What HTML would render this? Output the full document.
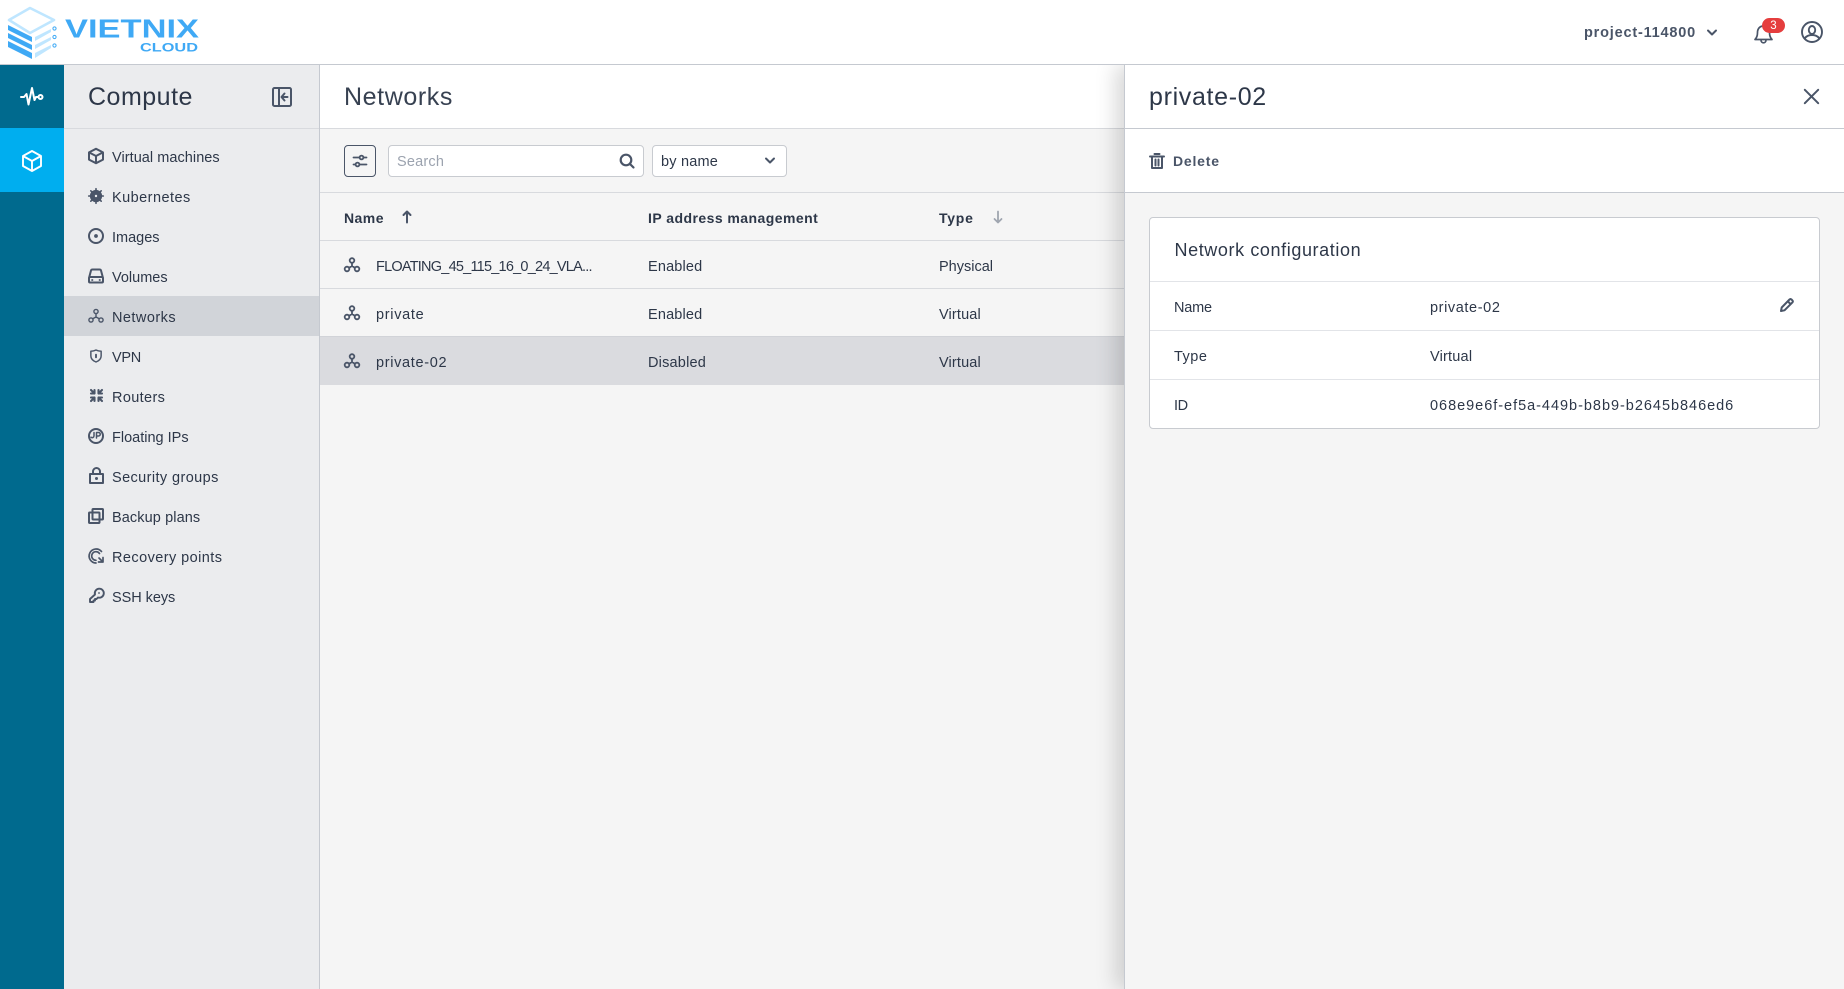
<!DOCTYPE html>
<html lang="en"><head><meta charset="utf-8"><title>Networks</title>
<style>
*{box-sizing:border-box;margin:0;padding:0}
html,body{width:1844px;height:989px;overflow:hidden;background:#f5f5f5}
body{font-family:"Liberation Sans",Arial,sans-serif;color:#2d3748;position:relative}
.a{position:absolute}
.t{position:absolute;white-space:nowrap;font-size:14.5px;line-height:20px;color:#2d3748}
.b{font-weight:700;font-size:14px;letter-spacing:.45px}
.h{font-size:25px;line-height:32px;letter-spacing:.5px}
svg{position:absolute;display:block;fill:none;stroke:#4a5568;stroke-width:1.7;stroke-linecap:round;stroke-linejoin:round;overflow:visible}
.hl{position:absolute;height:1px;background:#d8dade}
</style></head><body>

<!-- sidebar -->
<aside class="a" style="left:64px;top:65px;width:256px;height:924px;background:#ebecee;border-right:1px solid #c5c9d0">
<div class="hl" style="left:0;top:63px;width:255px"></div>
<div class="a" style="left:0;top:231px;width:255px;height:40px;background:#d1d4d9"></div>
</aside>
<span class="t h" style="left:88px;top:81px">Compute</span>
<svg style="left:272px;top:87px;stroke-width:2" width="20" height="20" viewBox="0 0 20 20"><rect x="1" y="1" width="18" height="18" rx="1.500"/><path d="M7 1v18M15.500 10H10M12.500 6.500L9.500 10l3 3.500"/></svg>

<span class="t" style="left:112px;top:148px;letter-spacing:.05px">Virtual machines</span>
<span class="t" style="left:112px;top:188px;letter-spacing:.45px">Kubernetes</span>
<span class="t" style="left:112px;top:228px">Images</span>
<span class="t" style="left:112px;top:268px">Volumes</span>
<span class="t" style="left:112px;top:308px;letter-spacing:.45px">Networks</span>
<span class="t" style="left:112px;top:348px;letter-spacing:-.3px">VPN</span>
<span class="t" style="left:112px;top:388px;letter-spacing:.35px">Routers</span>
<span class="t" style="left:112px;top:428px">Floating IPs</span>
<span class="t" style="left:112px;top:468px;letter-spacing:.4px">Security groups</span>
<span class="t" style="left:112px;top:508px;letter-spacing:.1px">Backup plans</span>
<span class="t" style="left:112px;top:548px;letter-spacing:.43px">Recovery points</span>
<span class="t" style="left:112px;top:588px;letter-spacing:-.05px">SSH keys</span>

<svg style="left:88px;top:148px" width="16" height="16" viewBox="0 0 16 16"><path d="M8 .8l7 3.600v7.200l-7 3.600-7-3.600V4.400zM1 4.400l7 3.600 7-3.600M8 8v7.200" stroke-width="2"/></svg>
<svg style="left:88px;top:188px" width="16" height="16" viewBox="0 0 16 16"><circle cx="8" cy="8" r="5.300" fill="#4a5568"/><path d="M8 .7v14.600M.7 8h14.600M2.800 2.800l10.400 10.400M13.200 2.800L2.800 13.200" stroke-width="1.600"/><circle cx="8" cy="8" r="1.200" fill="#ebecee" style="stroke:none"/></svg>
<svg style="left:88px;top:228px" width="16" height="16" viewBox="0 0 16 16"><circle cx="8" cy="8" r="7" stroke-width="2"/><circle cx="8" cy="8" r="1.900" fill="#4a5568" style="stroke:none"/></svg>
<svg style="left:88px;top:268px" width="16" height="16" viewBox="0 0 16 16"><path d="M1 10L3 2.500Q3.300 1.500 4.500 1.500h7q1.200 0 1.500 1L15 10M2 9h12a1 1 0 0 1 1 1v3.500a1 1 0 0 1-1 1H2a1 1 0 0 1-1-1V10a1 1 0 0 1 1-1z" stroke-width="2"/><path d="M4 12h.5M11.500 12h.5" stroke-width="1.700"/></svg>
<svg style="left:88px;top:308px;stroke-width:1.400" width="16" height="16" viewBox="0 0 16 16"><circle cx="8" cy="3.500" r="2.100"/><circle cx="3" cy="12" r="2.100"/><circle cx="13" cy="12" r="2.100"/><path d="M8 5.600V9M8 9l-3.300 1.800M8 9l3.300 1.800"/></svg>
<svg style="left:90px;top:349px;stroke-width:1.700" width="12" height="14" viewBox="0 0 14 16"><path d="M7 1q3 1.500 6 1.500V8q0 4.500-6 7-6-2.500-6-7V2.500Q4 2.500 7 1z"/><path d="M7 6.500v3" stroke-width="2.200"/></svg>
<svg style="left:90px;top:389px;stroke-width:2.100" width="13" height="13" viewBox="0 0 13 13"><path d="M1 1l3.500 3.500M4.500 1v3.500H1M12 1L8.500 4.500M8.500 1v3.500H12M1 12l3.500-3.500M4.500 12V8.500H1M12 12L8.500 8.500M8.500 12V8.500H12"/></svg>
<svg style="left:88px;top:428px;stroke-width:2" width="16" height="16" viewBox="0 0 16 16"><circle cx="8" cy="8" r="7"/><path d="M6 4.500V8a1.800 1.800 0 0 1-3 1.200M8.500 10V4.500h2a1.700 1.700 0 0 1 0 3.500h-2" stroke-width="1.500"/></svg>
<svg style="left:89px;top:467px;stroke-width:2" width="15" height="17" viewBox="0 0 15 17"><rect x="1" y="7" width="13" height="9"/><path d="M4 7V4.500a3.500 3.500 0 0 1 7 0V7"/><circle cx="7.500" cy="11.500" r="1.500" fill="#4a5568" style="stroke:none"/></svg>
<svg style="left:88px;top:508px;stroke-width:2" width="16" height="16" viewBox="0 0 16 16"><rect x="4.500" y="1" width="10.500" height="10.500" rx=".7"/><rect x="1" y="4.500" width="10.500" height="10.500" rx=".7"/></svg>
<svg style="left:88px;top:548px;stroke-width:1.700" width="16" height="16" viewBox="0 0 16 16"><path d="M13.500 3.500A7 7 0 1 0 8 15M11.500 5.500A4.300 4.300 0 1 0 8 12.300M15 9.500V14h-4.500M15 14l-4-4"/></svg>
<svg style="left:89px;top:588px;stroke-width:1.900" width="15" height="15" viewBox="0 0 15 15"><path d="M6 6.500a4.500 4.500 0 1 1 3 3L7.500 11H6v1.500H4.500V14H1v-3z"/><circle cx="10" cy="5" r=".9" fill="#4a5568" style="stroke:none"/></svg>

<!-- main -->
<main class="a" style="left:320px;top:65px;width:805px;height:924px;background:#f5f5f5">
<div class="a" style="left:0;top:0;width:805px;height:64px;background:#fff;border-bottom:1px solid #d8dade"></div>
<div class="hl" style="left:0;top:127px;width:805px"></div>
<div class="hl" style="left:0;top:175px;width:805px"></div>
<div class="hl" style="left:0;top:223px;width:805px"></div>
<div class="a" style="left:0;top:271px;width:805px;height:49px;background:#dadbdf;border-top:1px solid #d1d3d8"></div>
</main>
<span class="t h" style="left:344px;top:81px;color:#374151;letter-spacing:.6px">Networks</span>

<div class="a" style="left:344px;top:145px;width:32px;height:32px;border:1px solid #4a5568;border-radius:4px"></div>
<svg style="left:352px;top:153px;stroke-width:1.800" width="16" height="16" viewBox="0 0 16 16"><path d="M1.500 4.500h13M1.500 11.500h13"/><circle cx="9.500" cy="4.500" r="1.900" fill="#f5f5f5"/><circle cx="5.500" cy="11.500" r="1.900" fill="#f5f5f5"/></svg>
<div class="a" style="left:388px;top:145px;width:256px;height:32px;background:#fff;border:1px solid #c8cbd0;border-radius:4px"></div>
<span class="t" style="left:397px;top:152px;color:#9ca3af;letter-spacing:.2px">Search</span>
<svg style="left:619px;top:153px;stroke-width:2.200" width="16" height="16" viewBox="0 0 16 16"><circle cx="7" cy="7" r="5.300"/><path d="M11 11l3.500 3.500"/></svg>
<div class="a" style="left:652px;top:145px;width:135px;height:32px;background:#fff;border:1px solid #c8cbd0;border-radius:4px"></div>
<span class="t" style="left:661px;top:152px;letter-spacing:.2px">by name</span>
<svg style="left:764px;top:156px" width="12" height="10" viewBox="0 0 12 10"><path d="M2 2.500L6 6.500 10 2.500" stroke-width="2"/></svg>

<span class="t b" style="left:344px;top:208px">Name</span>
<svg style="left:402px;top:210px;stroke-width:2" width="10" height="14" viewBox="0 0 10 14"><path d="M5 12.500V2M1.500 5L5 1.500 8.500 5"/></svg>
<span class="t b" style="left:648px;top:208px">IP address management</span>
<span class="t b" style="left:939px;top:208px;letter-spacing:.75px">Type</span>
<svg style="left:993px;top:210px;stroke:#a0a6b0;stroke-width:1.800" width="10" height="14" viewBox="0 0 10 14"><path d="M5 1.500V12M1.500 9L5 12.500 8.500 9"/></svg>

<svg style="left:344px;top:257px;stroke-width:1.800" width="16" height="16" viewBox="0 0 16 16"><circle cx="8" cy="3.500" r="2.300"/><circle cx="3" cy="12" r="2.300"/><circle cx="13" cy="12" r="2.300"/><path d="M8 5.800V9M8 9l-3 1.800M8 9l3 1.800"/></svg>
<svg style="left:344px;top:305px;stroke-width:1.800" width="16" height="16" viewBox="0 0 16 16"><circle cx="8" cy="3.500" r="2.300"/><circle cx="3" cy="12" r="2.300"/><circle cx="13" cy="12" r="2.300"/><path d="M8 5.800V9M8 9l-3 1.800M8 9l3 1.800"/></svg>
<svg style="left:344px;top:353px;stroke-width:1.800" width="16" height="16" viewBox="0 0 16 16"><circle cx="8" cy="3.500" r="2.300"/><circle cx="3" cy="12" r="2.300"/><circle cx="13" cy="12" r="2.300"/><path d="M8 5.800V9M8 9l-3 1.800M8 9l3 1.800"/></svg>

<span class="t" style="left:376px;top:257px;letter-spacing:-.77px">FLOATING_45_115_16_0_24_VLA...</span>
<span class="t" style="left:376px;top:305px;letter-spacing:.7px">private</span>
<span class="t" style="left:376px;top:353px;letter-spacing:.67px">private-02</span>
<span class="t" style="left:648px;top:257px;letter-spacing:.17px">Enabled</span>
<span class="t" style="left:648px;top:305px;letter-spacing:.17px">Enabled</span>
<span class="t" style="left:648px;top:353px;letter-spacing:.2px">Disabled</span>
<span class="t" style="left:939px;top:257px">Physical</span>
<span class="t" style="left:939px;top:305px;letter-spacing:.15px">Virtual</span>
<span class="t" style="left:939px;top:353px;letter-spacing:.15px">Virtual</span>

<!-- right panel -->
<section class="a" style="left:1124px;top:65px;width:720px;height:924px;background:#f5f5f5;border-left:1px solid #c5c9d0;box-shadow:-8px 0 20px rgba(0,0,0,.16)">
<div class="a" style="left:0;top:0;width:719px;height:64px;background:#fff;border-bottom:1px solid #c5c9d0"></div>
<div class="a" style="left:0;top:64px;width:719px;height:64px;background:#fff;border-bottom:1px solid #c5c9d0"></div>
<div class="a" style="left:24px;top:152px;width:671px;height:212px;background:#fff;border:1px solid #c8cbd0;border-radius:4px">
<div class="hl" style="left:0;top:63px;width:669px;background:#e2e4e8"></div>
<div class="hl" style="left:0;top:112px;width:669px;background:#e2e4e8"></div>
<div class="hl" style="left:0;top:161px;width:669px;background:#e2e4e8"></div>
</div>
</section>
<span class="t h" style="left:1149px;top:81px;letter-spacing:.67px">private-02</span>
<svg style="left:1804px;top:89px;stroke-width:2" width="15" height="15" viewBox="0 0 15 15"><path d="M.8.8l13.400 13.400M14.200.8L.8 14.200"/></svg>
<svg style="left:1149px;top:153px;stroke-width:2" width="16" height="16" viewBox="0 0 16 16"><path d="M1 3.500h14M5.500 1h5M3 3.500V15h10V3.500M6.500 6.500v6M9.500 6.500v6"/></svg>
<span class="t b" style="left:1173px;top:151px;color:#4a5568;letter-spacing:.8px">Delete</span>
<span class="t" style="left:1174.500px;top:240px;font-size:18px;line-height:20px;letter-spacing:.6px">Network configuration</span>
<span class="t" style="left:1174px;top:298px;letter-spacing:-.2px">Name</span>
<span class="t" style="left:1430px;top:298px;letter-spacing:.6px">private-02</span>
<svg style="left:1779px;top:298px;stroke-width:2" width="15" height="15" viewBox="0 0 15 15"><path d="M2 13l.7-3.500L10.500 1.500q1-.9 2 0l.9.9q.9 1 0 2L5.500 12.300zM9 3.500l2.500 2.500"/></svg>
<span class="t" style="left:1174px;top:347px;letter-spacing:.5px">Type</span>
<span class="t" style="left:1430px;top:347px;letter-spacing:.2px">Virtual</span>
<span class="t" style="left:1174px;top:396px;letter-spacing:-.4px">ID</span>
<span class="t" style="left:1430px;top:396px;letter-spacing:.97px">068e9e6f-ef5a-449b-b8b9-b2645b846ed6</span>

<!-- top bar -->
<header class="a" style="left:0;top:0;width:1844px;height:65px;background:#fff;border-bottom:1px solid #c5c9d0">
<svg style="left:0;top:0;stroke:none" width="210" height="64" viewBox="0 0 210 64">
 <path d="M30 8L54 20 30 33 9 20z" fill="#fff" stroke="#bfe6ff" stroke-width="2.600"/>
 <path d="M8 25L32 37V42L8 30z" fill="#3fa9f5" style="stroke:none"/>
 <path d="M8 33L32 45V50L8 38z" fill="#3fa9f5" style="stroke:none"/>
 <path d="M8 41L32 53V59L8 47z" fill="#3fa9f5" style="stroke:none"/>
 <path d="M35 37L51 29V32L35 41zM35 45L51 37V40L35 49zM35 53L51 45V48L35 58z" fill="#bfe6ff" style="stroke:none"/>
 <circle cx="54.500" cy="28.500" r="1.600" fill="#fff" stroke="#3fa9f5" stroke-width="1"/>
 <circle cx="54.500" cy="37" r="1.600" fill="#fff" stroke="#3fa9f5" stroke-width="1"/>
 <circle cx="54.500" cy="45.500" r="1.600" fill="#fff" stroke="#3fa9f5" stroke-width="1"/>
 <text x="65" y="37.500" textLength="134" lengthAdjust="spacingAndGlyphs" font-family="Liberation Sans" font-weight="700" font-size="26" fill="#3fa9f5" style="stroke:none">VIETNIX</text>
 <text x="140" y="51.500" textLength="58" lengthAdjust="spacingAndGlyphs" font-family="Liberation Sans" font-weight="700" font-size="11.500" fill="#3fa9f5" style="stroke:none">CLOUD</text>
</svg>
<span class="t" style="left:1584px;top:23px;font-size:14.500px;font-weight:700;letter-spacing:.8px;color:#4a5568">project-114800</span>
<svg style="left:1706px;top:28px" width="12" height="10" viewBox="0 0 12 10"><path d="M2 2.500L6 6.500 10 2.500" stroke-width="2"/></svg>
<svg style="left:1753px;top:22px" width="22" height="22" viewBox="0 0 22 22"><path d="M2 17.500c1.500-1.500 2.500-3 2.500-7 0-4 2.500-6.500 6-6.500 3.500 0 6 2.500 6 6.500 0 4 1 5.500 2.500 7zM8 18c0 1.700 1.200 2.800 2.500 2.800s2.500-1.100 2.500-2.800"/></svg>
<div class="a" style="left:1762px;top:18px;width:23px;height:15px;border-radius:8px;background:#e53e3e;color:#fff;font-size:11.500px;line-height:16px;text-align:center">3</div>
<svg style="left:1801px;top:21px" width="22" height="22" viewBox="0 0 22 22"><circle cx="11" cy="11" r="10" stroke-width="1.900"/><ellipse cx="11" cy="9" rx="3.200" ry="4" stroke-width="1.900"/><path d="M4 17c2-2.500 4-3 7-3s5 .5 7 3" stroke-width="1.900"/></svg>
</header>

<!-- rail -->
<nav class="a" style="left:0;top:65px;width:64px;height:924px;background:#006a8e">
<div class="a" style="left:0;top:63px;width:64px;height:64px;background:#00aeef"></div>
<svg style="left:20px;top:21px;stroke:#fff;stroke-width:2" width="24" height="22" viewBox="0 0 24 22"><path d="M1 11h3l2.500-3 2 10.500L12 2l2.500 12 1.500-3h2"/><circle cx="20.500" cy="11" r="2"/></svg>
<svg style="left:22px;top:85px;stroke:#fff;stroke-width:1.900" width="20" height="22" viewBox="0 0 20 22"><path d="M10 1l9 5v10l-9 5-9-5V6zM1 6l9 5 9-5M10 11v10"/></svg>
</nav>
</body></html>
